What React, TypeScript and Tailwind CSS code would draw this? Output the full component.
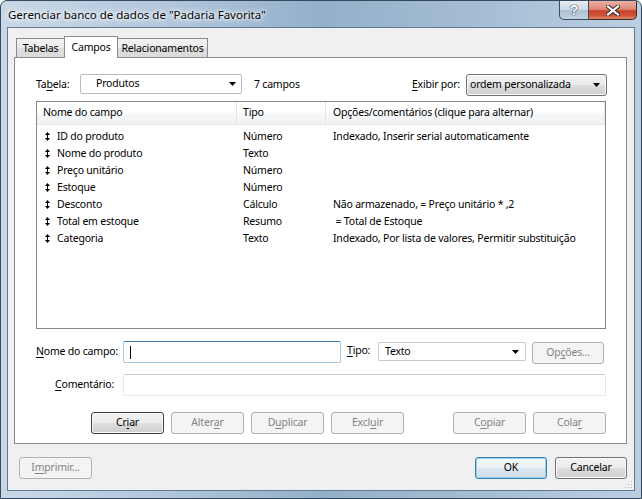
import type { ReactNode } from "react";

const btnNormal =
  "border-[#707070] bg-[linear-gradient(to_bottom,#f2f2f2_0%,#ebebeb_50%,#dddddd_51%,#cfcfcf_100%)] shadow-[inset_0_0_0_1px_#fbfbfb] text-black";
const btnDisabled = "border-[#adb2b5] bg-[#f4f4f4] text-[#838383]";
const btnDefault =
  "border-[#3e3e3e] bg-[linear-gradient(to_bottom,#f2f2f2_0%,#ebebeb_50%,#dddddd_51%,#cfcfcf_100%)] shadow-[inset_0_0_0_1px_#fbfbfb] text-black";
const btnFocus =
  "border-[#3c7fb1] bg-[linear-gradient(to_bottom,#f3f8fb_0%,#eaf1f6_50%,#dbe6ee_51%,#cfdde8_100%)] shadow-[inset_0_0_0_1px_#92d3f3] text-black";

function Btn({
  children,
  kind = "normal",
  className = "",
}: {
  children: ReactNode;
  kind?: "normal" | "disabled" | "default" | "focus";
  className?: string;
}) {
  const k =
    kind === "disabled" ? btnDisabled : kind === "default" ? btnDefault : kind === "focus" ? btnFocus : btnNormal;
  return (
    <div className={`h-[22px] flex items-center justify-center rounded-[3px] border ${k} ${className}`}>
      {children}
    </div>
  );
}

function U({ children }: { children: ReactNode }) {
  return <span className="underline decoration-1 underline-offset-[2px]">{children}</span>;
}

function Arrow() {
  return (
    <svg width="7" height="4" viewBox="0 0 7 4">
      <polygon points="0,0 7,0 3.5,4" fill="#000" />
    </svg>
  );
}

function Sort() {
  return (
    <svg width="5" height="9" viewBox="0 0 5 9" className="shrink-0">
      <polygon points="0,3 2.5,0 5,3" fill="#000" />
      <rect x="2" y="3" width="1" height="3" fill="#000" />
      <polygon points="0,6 5,6 2.5,9" fill="#000" />
    </svg>
  );
}

const rows = [
  ["ID do produto", "Número", "Indexado, Inserir serial automaticamente"],
  ["Nome do produto", "Texto", ""],
  ["Preço unitário", "Número", ""],
  ["Estoque", "Número", ""],
  ["Desconto", "Cálculo", "Não armazenado, = Preço unitário * ,2"],
  ["Total em estoque", "Resumo", " = Total de Estoque"],
  ["Categoria", "Texto", "Indexado, Por lista de valores, Permitir substituição"],
];

export default function App() {
  return (
    <div className="w-[642px] h-[499px] overflow-hidden bg-white">
      <div className="relative w-[642px] h-[499px] rounded-t-[7px] border border-[#34495e] bg-[linear-gradient(to_right,#c9d8e7_0%,#b2c7dc_25%,#93b0ca_50%,#a5bdd4_75%,#bccfe1_100%)] flex flex-col font-['Noto_Sans',sans-serif] text-[10.5px] tracking-[-0.2px] text-black whitespace-nowrap">
        {/* title bar */}
        <div className="h-[26px] flex items-start shrink-0">
          <div className="pl-[7px] pt-[5px] text-[11.5px] tracking-normal [text-shadow:0_0_8px_#fff,0_0_5px_#fff,0_0_3px_#fff]">
            Gerenciar banco de dados de "Padaria Favorita"
          </div>
          <div className="ml-auto mr-[4px] flex">
            <div className="w-[30px] h-[19px] rounded-bl-[5px] border border-t-0 border-[#3a4a5c] bg-[linear-gradient(to_bottom,#e6edf4_0%,#cbd8e4_50%,#adbfd1_51%,#c2d3e3_100%)] flex items-center justify-center text-white font-bold text-[14px] font-['Liberation_Sans',sans-serif] [text-shadow:0_0_1px_#2c3c4e,0_0_1px_#2c3c4e,0_0_1px_#2c3c4e]">
              ?
            </div>
            <div className="w-[48px] h-[19px] rounded-br-[5px] border border-t-0 border-l-0 border-[#3a2a28] bg-[linear-gradient(to_bottom,#eab0a2_0%,#df8977_45%,#c7432c_55%,#cf5236_80%,#e08a6c_100%)] flex items-center justify-center">
              <svg width="14" height="11" viewBox="0 0 14 11">
                <path d="M2 1.5 L12 9.5 M12 1.5 L2 9.5" stroke="#3a2a28" strokeWidth="4.2" strokeLinecap="square" />
                <path d="M2 1.5 L12 9.5 M12 1.5 L2 9.5" stroke="#fff" strokeWidth="2.2" strokeLinecap="square" />
              </svg>
            </div>
          </div>
        </div>

        {/* client area */}
        <div className="relative mx-[6px] h-[464px] shrink-0 border border-[#5f7a95] bg-[#f0f0f0] flex flex-col pt-[8px] px-[6px]">
          {/* tabs */}
          <div className="flex items-end h-[21px] pl-[2px] relative z-10">
            <div className="w-[48px] h-[19px] border border-b-0 border-r-0 border-[#898c95] bg-[linear-gradient(to_bottom,#f3f3f3_0%,#ebebeb_50%,#dedede_51%,#dadada_100%)] flex items-center justify-center pt-[1px]">
              Tabelas
            </div>
            <div className="w-[54px] h-[22px] -mb-px border border-b-0 border-[#898c95] bg-white flex items-start justify-center pt-[3px]">
              Campos
            </div>
            <div className="w-[90px] h-[19px] border border-b-0 border-l-0 border-[#898c95] bg-[linear-gradient(to_bottom,#f3f3f3_0%,#ebebeb_50%,#dedede_51%,#dadada_100%)] flex items-center justify-center pt-[1px]">
              Relacionamentos
            </div>
          </div>

          {/* panel */}
          <div className="h-[387px] w-[613px] border border-[#898c95] bg-white flex flex-col pl-[21px] pr-[19px]">
            {/* table row */}
            <div className="mt-[16px] h-[22px] flex items-center">
              <div className="w-[44px]">
                Ta<U>b</U>ela:
              </div>
              <div className="w-[162px] h-[20px] rounded-[2px] border border-[#b9b9b9] flex items-center pl-[15px] pr-[5px] self-start">
                <span>Produtos</span>
                <span className="ml-auto">
                  <Arrow />
                </span>
              </div>
              <div className="ml-[12px]">7 campos</div>
              <div className="ml-auto mr-[6px]">
                <U>E</U>xibir por:
              </div>
              <div
                className={`w-[141px] h-[22px] rounded-[3px] border ${btnNormal} flex items-center pl-[3px] pr-[6px]`}
              >
                <span>ordem personalizada</span>
                <span className="ml-auto">
                  <Arrow />
                </span>
              </div>
            </div>

            {/* list */}
            <div className="mt-[5px] h-[228px] w-[570px] border border-[#828790] bg-white flex flex-col">
              <div className="h-[23px] flex border-b border-[#e5e5e5] bg-[linear-gradient(to_bottom,#ffffff_0%,#ffffff_45%,#f6f7f8_55%,#f1f2f4_100%)] shrink-0">
                <div className="w-[200px] pl-[6px] flex items-center border-r border-[#e3e4e8]">Nome do campo</div>
                <div className="w-[89px] pl-[6px] flex items-center border-r border-[#e3e4e8]">Tipo</div>
                <div className="w-[279px] pl-[7px] flex items-center border-r border-[#e3e4e8]">
                  Opções/comentários (clique para alternar)
                </div>
              </div>
              <div className="pt-[3px] flex flex-col">
                {rows.map(([name, type, opt]) => (
                  <div key={name} className="h-[17px] flex items-center">
                    <div className="w-[200px] pl-[8px] flex items-center gap-[7px]">
                      <Sort />
                      <span>{name}</span>
                    </div>
                    <div className="w-[89px] pl-[6px]">{type}</div>
                    <div className="pl-[7px] whitespace-pre">{opt}</div>
                  </div>
                ))}
              </div>
            </div>

            {/* name row */}
            <div className="mt-[12px] h-[23px] flex items-start">
              <div className="w-[87px] h-[22px] flex items-center">
                <U>N</U>ome do campo:
              </div>
              <div className="w-[218px] h-[22px] rounded-[2px] border border-[#a4c9e3] border-t-[#3d7bad] flex items-center">
                <span className="ml-[6px] w-px h-[13px] bg-black" />
              </div>
              <div className="ml-[6px] w-[31px] h-[20px] flex items-center">
                <U>T</U>ipo:
              </div>
              <div className="w-[148px] h-[19px] mt-[1px] rounded-[2px] border border-[#c9c9c9] flex items-center pl-[6px] pr-[6px]">
                <span>Texto</span>
                <span className="ml-auto">
                  <Arrow />
                </span>
              </div>
              <Btn kind="disabled" className="ml-[6px] w-[72px] mt-[1px]">
                Op<U>ç</U>ões...
              </Btn>
            </div>

            {/* comment row */}
            <div className="mt-[10px] h-[22px] flex items-center">
              <div className="w-[87px] text-right pr-[9px]">
                <U>C</U>omentário:
              </div>
              <div className="w-[483px] h-[22px] rounded-[2px] border border-[#e3e9ef] border-t-[#c5cbd1]" />
            </div>

            {/* action buttons */}
            <div className="mt-[16px] flex pl-[55px]">
              <div className="flex gap-[7px]">
                <Btn kind="default" className="w-[73px]">
                  Cr<U>i</U>ar
                </Btn>
                <Btn kind="disabled" className="w-[73px]">
                  Alter<U>a</U>r
                </Btn>
                <Btn kind="disabled" className="w-[73px]">
                  D<U>u</U>plicar
                </Btn>
                <Btn kind="disabled" className="w-[73px]">
                  Excl<U>u</U>ir
                </Btn>
              </div>
              <div className="ml-auto mr-[1px] flex gap-[7px]">
                <Btn kind="disabled" className="w-[73px]">
                  C<U>o</U>piar
                </Btn>
                <Btn kind="disabled" className="w-[73px]">
                  Cola<U>r</U>
                </Btn>
              </div>
            </div>
          </div>

          {/* dialog buttons */}
          <div className="mt-[13px] flex pl-[5px]">
            <Btn kind="disabled" className="w-[73px]">
              I<U>m</U>primir...
            </Btn>
            <div className="ml-auto mr-[1px] flex gap-[8px]">
              <Btn kind="focus" className="w-[72px]">
                OK
              </Btn>
              <Btn className="w-[72px]">Cancelar</Btn>
            </div>
          </div>

          <svg width="10" height="10" viewBox="0 0 10 10" className="absolute right-[1px] bottom-[1px]">
            {[
              [8, 2],
              [8, 5],
              [5, 5],
              [8, 8],
              [5, 8],
              [2, 8],
            ].map(([x, y]) => (
              <g key={`${x}-${y}`}>
                <rect x={x} y={y} width="1" height="1" fill="#b8b8b8" />
                <rect x={x + 1} y={y + 1} width="1" height="1" fill="#fff" />
              </g>
            ))}
          </svg>
        </div>
      </div>
    </div>
  );
}
